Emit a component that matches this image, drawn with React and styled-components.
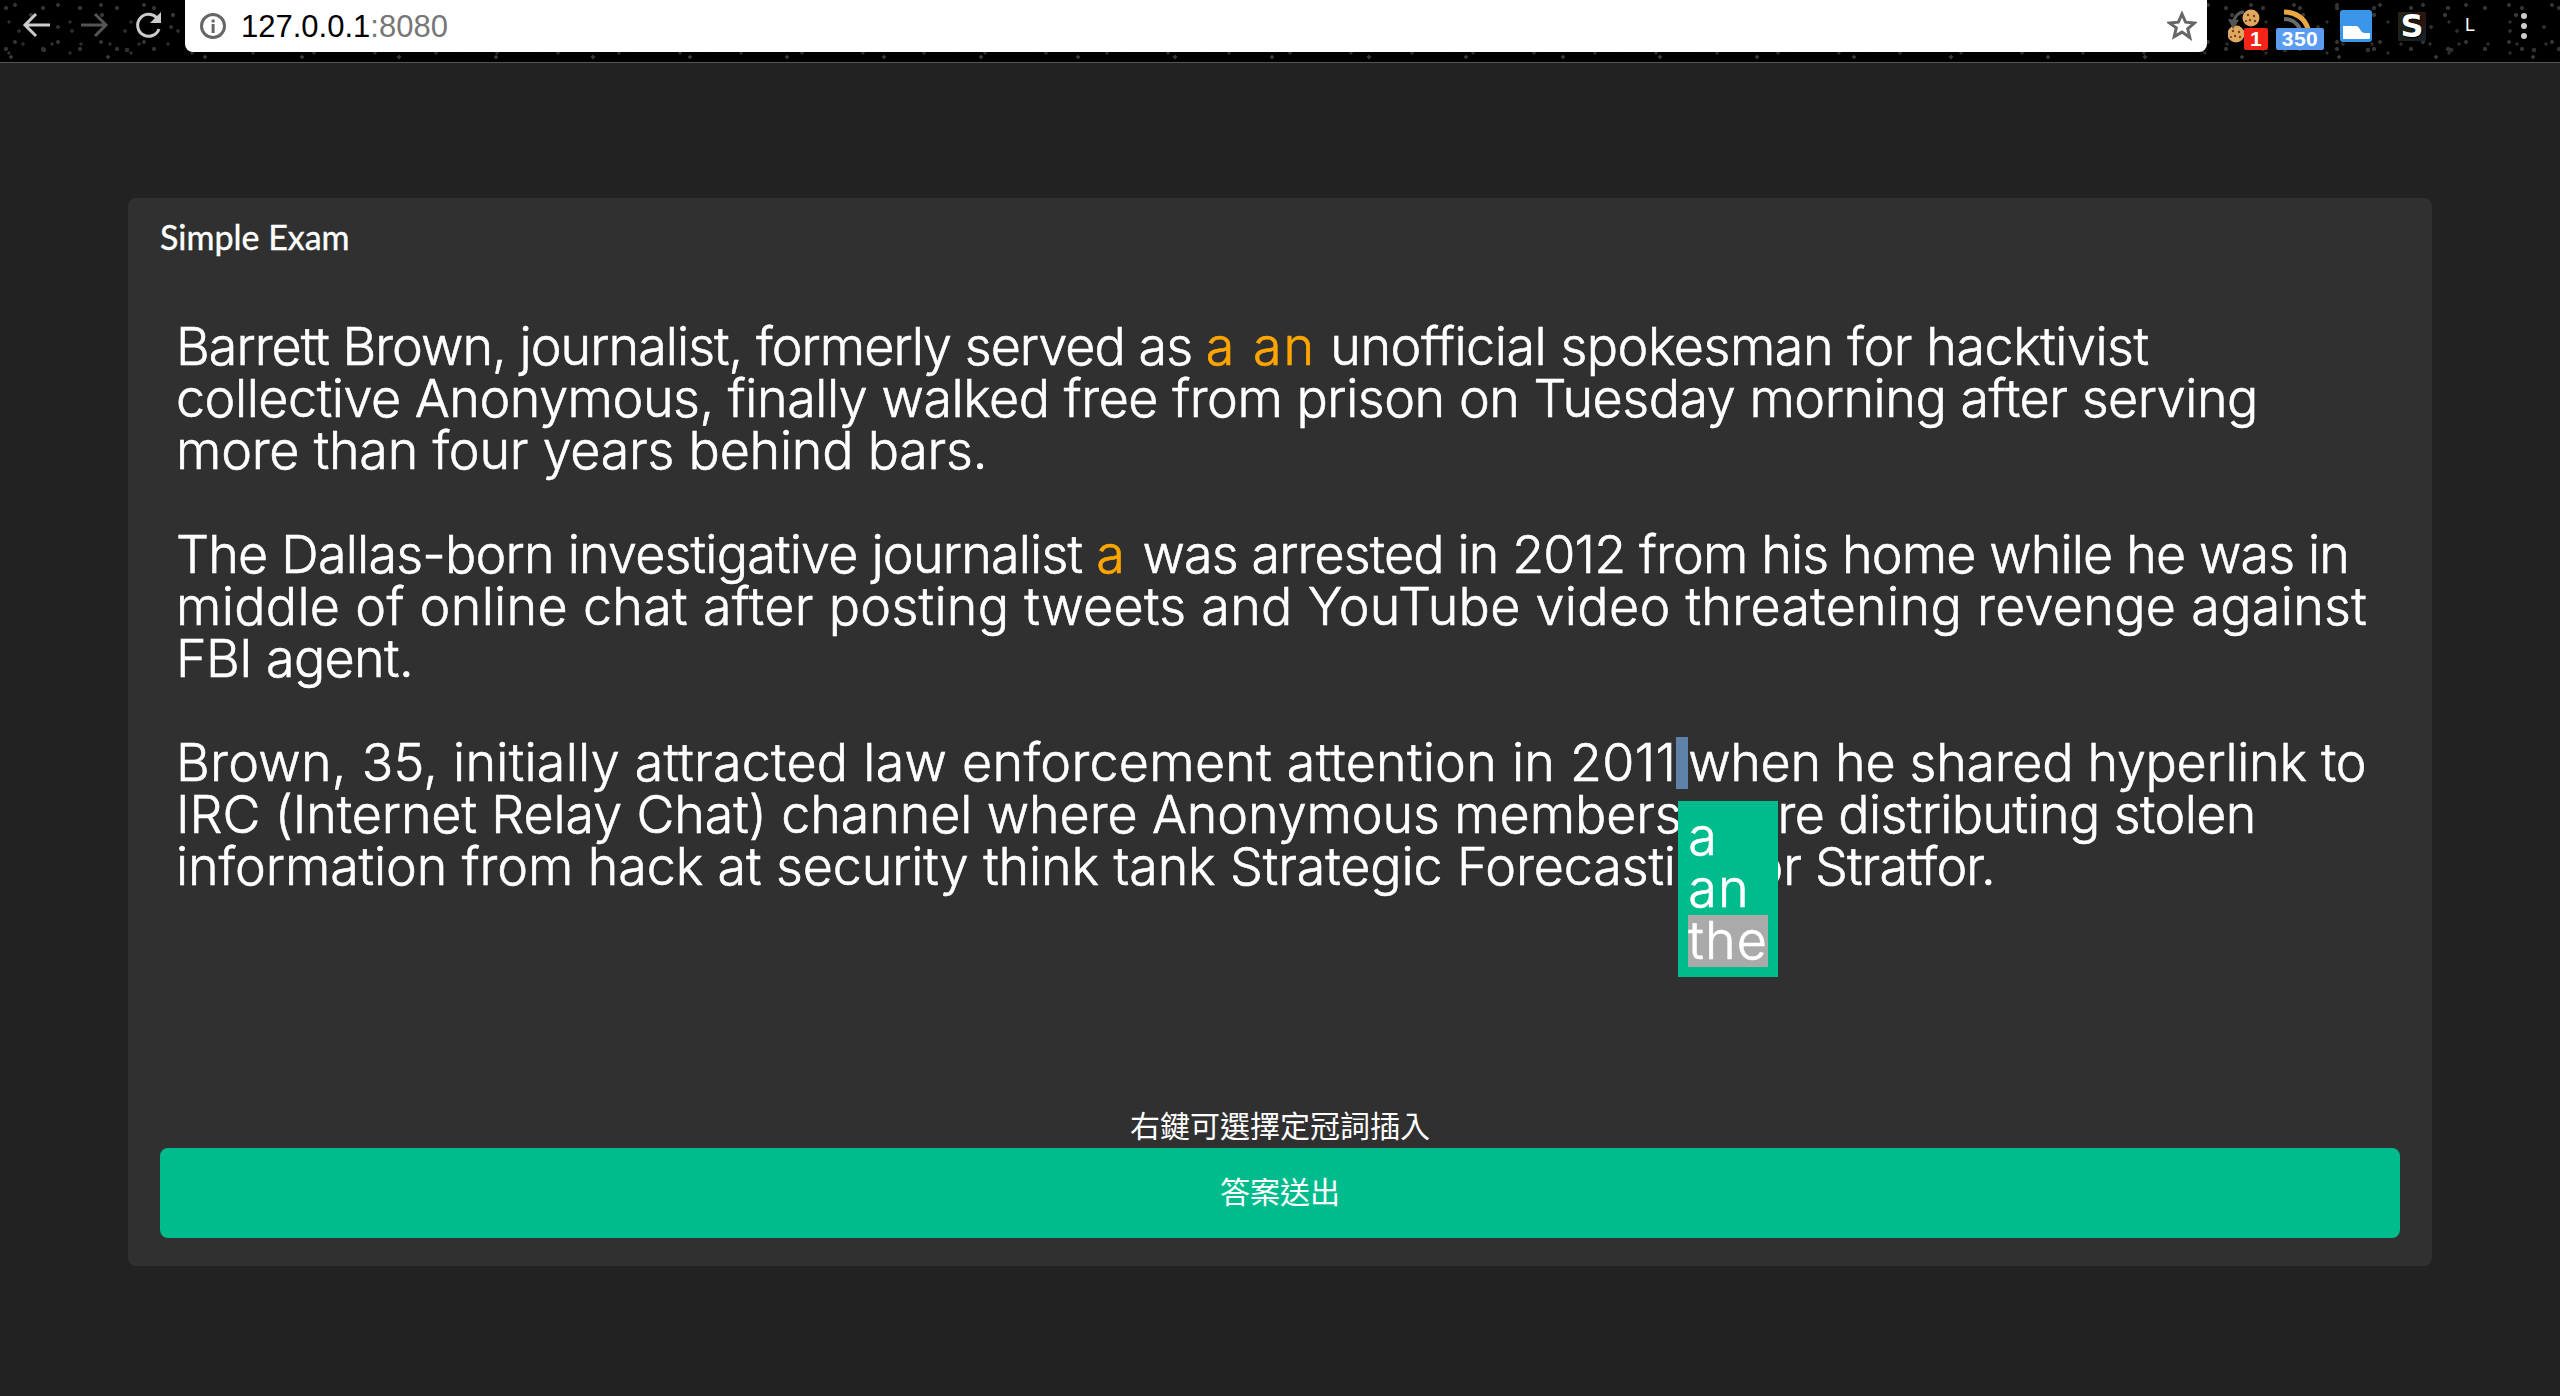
import React from 'react';
import styled, { createGlobalStyle } from 'styled-components';

const Global = createGlobalStyle`
  html, body { margin: 0; padding: 0; background: #222; }
  #root { width: 2560px; height: 1396px; overflow: hidden; }
`;

const Page = styled.div`
  width: 2560px;
  height: 1396px;
  display: flex;
  flex-direction: column;
  background: #222;
  color: #fff;
`;

const speck = (x, y, r, c) => `radial-gradient(circle at ${x}px ${y}px, ${c} ${r}px, transparent ${r + 0.6}px)`;

const Toolbar = styled.header`
  height: 62px;
  flex: none;
  display: flex;
  align-items: flex-start;
  padding-left: 22px;
  background-color: #000;
  background-image:
    ${speck(6, 8, 1.8, '#333')}, ${speck(19, 31, 1.5, '#2c2c2c')}, ${speck(31, 15, 1.7, '#383838')},
    ${speck(44, 50, 2, '#303030')}, ${speck(11, 57, 1.5, '#3a3a3a')}, ${speck(58, 27, 1.6, '#2e2e2e')},
    ${speck(23, 44, 1.4, '#2a2a2a')}, ${speck(15, 5, 1.6, '#333')}, ${speck(9, 22, 1.3, '#2f2f2f')};
  background-size: 37px 41px, 53px 47px, 71px 59px, 83px 61px, 97px 62px, 113px 43px, 29px 53px, 43px 37px, 61px 31px;
  border-bottom: 1px solid #555;
`;

const NavIcon = styled.svg`
  width: 30px;
  height: 30px;
  flex: none;
  margin: 10px ${p => p.$gap}px 0 0;
  fill: none;
  stroke: ${p => p.$tone};
  stroke-width: 3;
`;

const AddressBar = styled.div`
  width: 2022px;
  height: 52px;
  flex: none;
  display: flex;
  align-items: center;
  padding: 0 10px 0 14px;
  box-sizing: border-box;
  background: #fff;
  border-radius: 0 0 8px 8px;
`;

const InfoIcon = styled.svg`
  width: 28px;
  height: 28px;
  flex: none;
  margin-right: 14px;
`;

const Url = styled.div`
  flex: 1;
  padding-top: 2px;
  font: 400 31px/52px "Liberation Sans", Arial, sans-serif;
  color: #000;
`;

const Port = styled.span`
  color: #777;
`;

const StarIcon = styled.svg`
  width: 30px;
  height: 30px;
  flex: none;
  fill: none;
  stroke: #666;
  stroke-width: 3;
`;

const Extensions = styled.div`
  display: flex;
  align-items: flex-start;
  margin-left: 21px;
`;

const ExtSlot = styled.div`
  position: relative;
  flex: none;
  width: ${p => p.$w}px;
  height: 50px;
  margin-right: ${p => p.$gap}px;
`;

const ExtArt = styled.svg`
  position: absolute;
  left: ${p => p.$x}px;
  top: ${p => p.$y}px;
`;

const Badge = styled.span`
  position: absolute;
  right: 0;
  top: 28px;
  height: 22px;
  width: ${p => p.$w}px;
  border-radius: 2px;
  background: ${p => p.$bg};
  color: #fff;
  font: 700 21px/22px "Liberation Sans", Arial, sans-serif;
  text-align: center;
  letter-spacing: 0.5px;
`;

const STile = styled.div`
  width: 28px;
  height: 29px;
  margin-top: 12px;
  background: conic-gradient(#2b1512 0 25%, #182028 25% 50%, #1b2219 50% 75%, #262312 75%);
  color: #fff;
  font: 700 32px/29px "DejaVu Sans", sans-serif;
  text-align: center;
  text-shadow: 0 0 2px #000, 1px 1px 0 #000;
`;

const LetterL = styled.div`
  margin-top: 15px;
  color: #fff;
  font: 400 18px/20px "Liberation Sans", Arial, sans-serif;
`;

const Menu = styled.div`
  position: absolute;
  left: 2521px;
  top: 13px;
  display: flex;
  flex-direction: column;
  gap: 4px;
`;

const MenuDot = styled.span`
  width: 6px;
  height: 6px;
  border-radius: 50%;
  background: #ccc;
`;

const Main = styled.main`
  flex: 1;
  padding: 135px 128px 0;
`;

const Card = styled.section`
  height: 1068px;
  box-sizing: border-box;
  display: flex;
  flex-direction: column;
  padding: 15px 32px 28px;
  background: #303030;
  border-radius: 8px;
`;

const Title = styled.h1`
  margin: 0;
  font: 400 34px/48px Lato, "Liberation Sans", sans-serif;
  -webkit-text-stroke: 0.4px #fff;
  color: #fff;
`;

const Passage = styled.div`
  flex: 1;
  margin-top: 60px;
  padding-left: 16px;
  font: 300 52px/52px Inter, "Liberation Sans", sans-serif;
  -webkit-text-stroke: 0.6px;
  color: #fff;
`;

const Paragraph = styled.p`
  margin: 0 0 52px;
`;

const Line = styled.div`
  height: 52px;
  white-space: pre;
`;

const Segment = styled.span`
  letter-spacing: ${p => p.$ls || 0}px;
  color: ${p => (p.$accent ? '#ffa500' : 'inherit')};
`;

const Gap = styled.span`
  position: relative;
  display: inline-block;
  vertical-align: top;
  width: 12px;
  height: 52px;
  background: #5f82a8;
`;

const Picker = styled.div`
  position: absolute;
  left: 2px;
  top: 64px;
  z-index: 2;
  width: 100px;
  box-sizing: border-box;
  padding: 10px;
  background: #00bc8c;
  letter-spacing: 1.2px;
`;

const PickerOption = styled.div`
  height: 52px;
  background: ${p => (p.$active ? '#aaa' : 'transparent')};
`;

const Hint = styled.div`
  padding-bottom: 2px;
  text-align: center;
  font: 400 30px/44px "Noto Sans CJK TC", "Noto Sans CJK SC", sans-serif;
  color: #fff;
`;

const SubmitButton = styled.button`
  flex: none;
  width: 100%;
  height: 90px;
  padding: 0 0 5px;
  border: 0;
  border-radius: 8px;
  background: #00bc8c;
  color: #fff;
  font: 400 30px/85px "Noto Sans CJK TC", "Noto Sans CJK SC", sans-serif;
`;

const Cookie = ({ cx, cy }) => (
  <g>
    <circle cx={cx} cy={cy} r="8.5" fill="#e0a85e" />
    <circle cx={cx - 3} cy={cy - 3} r="1.2" fill="#6e4420" />
    <circle cx={cx + 3} cy={cy - 2} r="1.2" fill="#6e4420" />
    <circle cx={cx - 1} cy={cy + 2} r="1.2" fill="#6e4420" />
    <circle cx={cx + 4} cy={cy + 3} r="1.2" fill="#6e4420" />
    <circle cx={cx - 5} cy={cy + 3} r="1.1" fill="#6e4420" />
  </g>
);

const paragraphs = [
  [
    [
      { t: 'Barrett Brown, journalist, formerly served as ', ls: -0.95 },
      { t: 'a an', ls: 2.0, accent: true },
      { t: ' unofficial spokesman for hacktivist', ls: -0.45 },
    ],
    [{ t: 'collective Anonymous, finally walked free from prison on Tuesday morning after serving', ls: -0.45 }],
    [{ t: 'more than four years behind bars.', ls: -0.23 }],
  ],
  [
    [
      { t: 'The Dallas-born investigative journalist ', ls: -0.78 },
      { t: 'a', ls: 4, accent: true },
      { t: ' was arrested in 2012 from his home while he was in', ls: -0.86 },
    ],
    [{ t: 'middle of online chat after posting tweets and YouTube video threatening revenge against', ls: 0.32 }],
    [{ t: 'FBI agent.', ls: -0.65 }],
  ],
];

const options = ['a', 'an', 'the'];

export default function App() {
  return (
    <Page>
      <Global />
      <Toolbar>
        <NavIcon viewBox="0 0 30 30" $tone="#ccc" $gap={27}>
          <path d="M28 15H3M14 4 3 15l11 11" />
        </NavIcon>
        <NavIcon viewBox="0 0 30 30" $tone="#555" $gap={25}>
          <path d="M2 15h25M16 4l11 11-11 11" />
        </NavIcon>
        <NavIcon viewBox="0 0 30 30" $tone="#ccc" $gap={21}>
          <path d="M25 19a11 11 0 1 1-2.5-11.5" />
          <path d="M27 2v11H16z" fill="#ccc" stroke="none" />
        </NavIcon>
        <AddressBar>
          <InfoIcon viewBox="0 0 28 28">
            <circle cx="14" cy="14" r="11.5" fill="none" stroke="#666" strokeWidth="3" />
            <rect x="12.6" y="12" width="3" height="9" fill="#666" />
            <rect x="12.6" y="7.500" width="3" height="3" fill="#666" />
          </InfoIcon>
          <Url>127.0.0.1<Port>:8080</Port></Url>
          <StarIcon viewBox="0 0 30 30">
            <path d="m15 3 3.600 8.200 8.900.8-6.800 5.900 2.100 8.700L15 21.100l-7.800 4.500 2.100-8.700L2.500 12l8.900-.8z" />
          </StarIcon>
        </AddressBar>
        <Extensions>
          <ExtSlot $w={40} $gap={8}>
            <ExtArt $x={0} $y={8} width="34" height="36" viewBox="0 0 34 36">
              <Cookie cx={23} cy={10} />
              <Cookie cx={8} cy={26} />
              <path d="M5 16C6 8 11 4 16 4" fill="none" stroke="#555" strokeWidth="3" />
              <path d="M0 11l11 1-6 9z" fill="#555" />
            </ExtArt>
            <Badge $w={24} $bg="#f42318">1</Badge>
          </ExtSlot>
          <ExtSlot $w={48} $gap={16}>
            <ExtArt $x={7} $y={9} width="30" height="20" viewBox="0 0 30 20">
              <path d="M1 3c11 0 21 6 24 17" fill="none" stroke="#e9a844" strokeWidth="5" />
              <path d="M1 10c8 0 13 4 16 10" fill="none" stroke="#6a6a6a" strokeWidth="4" />
            </ExtArt>
            <Badge $w={48} $bg="#5a9cf0">350</Badge>
          </ExtSlot>
          <ExtSlot $w={32} $gap={26}>
            <ExtArt $x={0} $y={10} width="32" height="32" viewBox="0 0 32 32">
              <rect width="32" height="32" rx="3" fill="#3a96e8" />
              <path d="M3 16h13c4 0 4 7 9 7h5v5l-1 1H3z" fill="#fff" />
            </ExtArt>
          </ExtSlot>
          <STile>S</STile>
          <ExtSlot $w={39} $gap={0} />
          <LetterL>L</LetterL>
        </Extensions>
        <Menu>
          <MenuDot /><MenuDot /><MenuDot />
        </Menu>
      </Toolbar>
      <Main>
        <Card>
          <Title>Simple Exam</Title>
          <Passage>
            {paragraphs.map((lines, i) => (
              <Paragraph key={i}>
                {lines.map((segs, j) => (
                  <Line key={j}>
                    {segs.map((s, k) => (
                      <Segment key={k} $ls={s.ls} $accent={s.accent}>{s.t}</Segment>
                    ))}
                  </Line>
                ))}
              </Paragraph>
            ))}
            <Paragraph>
              <Line>
                <Segment $ls={0.27}>Brown, 35, initially attracted law enforcement attention in 2011</Segment>
                <Gap>
                  <Picker>
                    {options.map(o => (
                      <PickerOption key={o} $active={o === 'the'}>{o}</PickerOption>
                    ))}
                  </Picker>
                </Gap>
                <Segment $ls={-0.29}>when he shared hyperlink to</Segment>
              </Line>
              <Line>
                <Segment $ls={-0.1}>IRC (Internet Relay Chat) channel where Anonymous members </Segment>
                <Segment $ls={5}>we</Segment>
                <Segment $ls={-0.61}>re distributing stolen</Segment>
              </Line>
              <Line>
                <Segment $ls={-0.11}>information from hack at security think tank Strategic Forecasti</Segment>
                <Segment>ng o</Segment>
                <Segment $ls={-0.85}>r Stratfor.</Segment>
              </Line>
            </Paragraph>
          </Passage>
          <Hint>右鍵可選擇定冠詞插入</Hint>
          <SubmitButton>答案送出</SubmitButton>
        </Card>
      </Main>
    </Page>
  );
}
